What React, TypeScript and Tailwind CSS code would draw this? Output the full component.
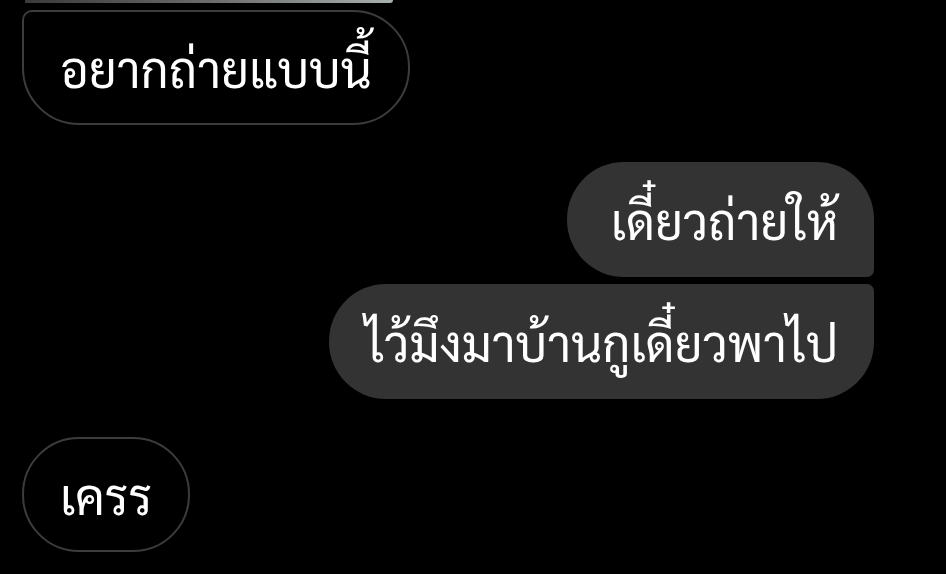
import React from 'react';

interface BubbleProps {
  text: string;
  mine?: boolean;
  className?: string;
}

function Bubble({ text, mine, className = '' }: BubbleProps) {
  const base = mine
    ? 'bg-[#333333] text-white'
    : 'border-2 border-[#3c3c3c] text-white';
  return (
    <div
      className={`${base} ${className} h-[115px] flex items-center pr-[36px] text-[49px] leading-none whitespace-nowrap font-['Sarabun','Noto_Sans_Thai',sans-serif]`}
    >
      {text}
    </div>
  );
}

export default function App() {
  return (
    <div className="w-[946px] h-[574px] bg-black overflow-hidden">
      <div className="w-[368px] h-[3px] ml-[25px] rounded-br-[10px] bg-gradient-to-r from-[#3a3a3a] via-[#6b6b6b] to-[#a8b0b0]" />
      <div className="flex flex-col pl-[22px] pr-[72px] pt-[7px]">
        <div className="flex justify-start">
          <Bubble
            text="อยากถ่ายแบบนี้"
            className="pl-[36px] rounded-tl-[10px] rounded-bl-[57px] rounded-r-[57px]"
          />
        </div>
        <div className="flex justify-end mt-[37px]">
          <Bubble
            mine
            text="เดี๋ยวถ่ายให้"
            className="pl-[44px] rounded-l-[57px] rounded-tr-[57px] rounded-br-[7px]"
          />
        </div>
        <div className="flex justify-end mt-[7px]">
          <Bubble
            mine
            text="ไว้มึงมาบ้านกูเดี๋ยวพาไป"
            className="pl-[36px] rounded-l-[57px] rounded-tr-[7px] rounded-br-[57px]"
          />
        </div>
        <div className="flex justify-start mt-[38px]">
          <Bubble text="เครร" className="pl-[36px] rounded-[57px]" />
        </div>
      </div>
    </div>
  );
}
